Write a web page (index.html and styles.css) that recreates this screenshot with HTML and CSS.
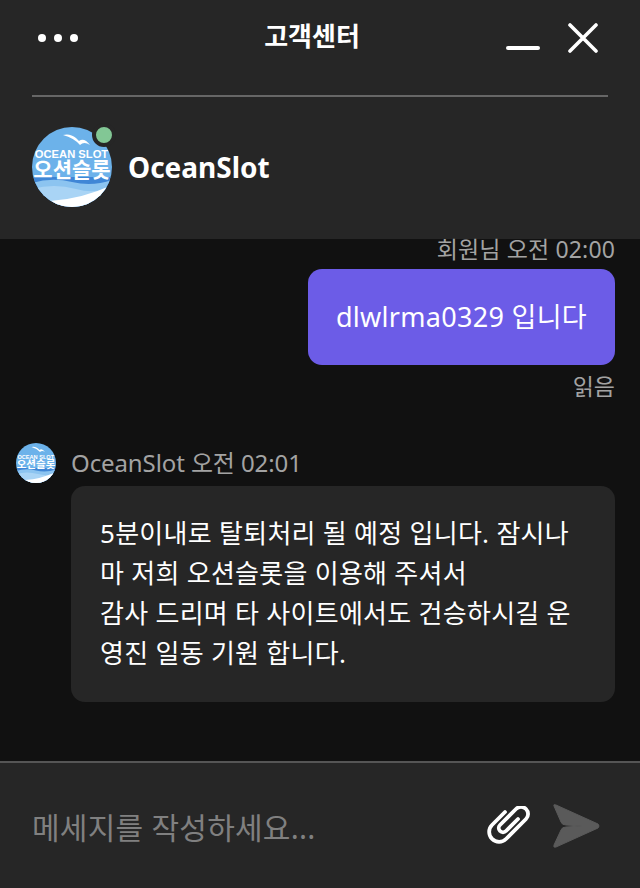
FILE: index.html
```html
<!DOCTYPE html>
<html lang="ko">

<head>
    <meta charset="utf-8">
    <title>고객센터</title>
    <link rel="stylesheet" href="styles.css">
</head>

<body>
    <div class="chat">
        <header class="top">
            <div class="bar">
                <div class="dots"><span></span><span></span><span></span></div>
                <h1 class="title">고객센터</h1>
                <div class="win">
                    <span class="min"></span>
                    <svg class="close" width="30" height="30" viewBox="0 0 30 30">
                        <path d="M2 2 L28 28 M28 2 L2 28" stroke="#fff" stroke-width="3.6" stroke-linecap="round" />
                    </svg>
                </div>
            </div>
            <div class="profile">
                <div class="avatar">
                    <svg class="logo" viewBox="0 0 80 80">
                        <use href="#logo" />
                    </svg>
                    <span class="online"></span>
                </div>
                <h2 class="name">OceanSlot</h2>
            </div>
        </header>

        <main class="list">
            <div class="msg mine">
                <div class="meta">회원님 오전 02:00</div>
                <div class="bubble purple">dlwlrma0329 입니다</div>
                <div class="read">읽음</div>
            </div>

            <div class="msg theirs">
                <svg class="small-logo" viewBox="0 0 80 80">
                    <use href="#logo" />
                </svg>
                <div class="theirs-body">
                    <div class="meta">OceanSlot 오전 02:01</div>
                    <div class="bubble gray">5분이내로 탈퇴처리 될 예정 입니다. 잠시나<br>마 저희 오션슬롯을 이용해 주셔서<br>감사 드리며 타 사이트에서도 건승하시길 운<br>영진 일동 기원 합니다.</div>
                </div>
            </div>
        </main>

        <footer class="bottom">
            <div class="placeholder">메세지를 작성하세요...</div>
            <svg class="clip" width="44" height="40" viewBox="0 0 44 40" fill="none">
                <path d="M18 6 L5 19 A9.9 9.9 0 0 0 19 33 L39 13 A7 7 0 0 0 29 3 L13 19 A4.2 4.2 0 0 0 19 25 L31 13" stroke="#fff" stroke-width="3.8" stroke-linecap="round" stroke-linejoin="round" />
            </svg>
            <svg class="send" width="48" height="44" viewBox="0 0 48 44">
                <path d="M2 2 Q1 0 4 1 L46 20 Q48 22 46 24 L4 43 Q1 44 2 41 L9 26 Q10 23 14 23 L30 22 L14 21 Q10 21 9 18 Z" fill="#5a5a5a" stroke="#5a5a5a" stroke-linejoin="round" />
            </svg>
        </footer>
    </div>

    <svg width="0" height="0" class="defs">
        <defs>
            <clipPath id="round">
                <circle cx="40" cy="40" r="40" />
            </clipPath>
            <g id="logo" clip-path="url(#round)">
                <rect width="80" height="80" fill="#6cb2ea" />
                <path d="M0 50 H80 V80 H0 Z" fill="#3f86d6" />
                <path d="M0 56 Q20 50 40 55 T80 53 V80 H0 Z" fill="#8cc4f0" />
                <path d="M0 62 Q22 56 44 62 T80 58 V80 H0 Z" fill="#a9d4f5" />
                <path d="M18 74 Q50 72 80 58 V80 H18 Z" fill="#fff" />
                <path d="M31 8 Q38 6 44 11 L47 14 Q52 10 58 18 Q52 14 48 18 Q42 11 31 8 Z" fill="#fff" />
                <text x="39.5" y="31" class="logo-en">OCEAN SLOT</text>
                <text x="40" y="50" class="logo-ko">오션슬롯</text>
            </g>
        </defs>
    </svg>
</body>

</html>
```

FILE: styles.css
```css
* {
    box-sizing: border-box;
    font-family: "Noto Sans", "Noto Sans CJK KR", sans-serif;
}

html,
body {
    margin: 0;
    padding: 0;
    height: 100%;
}

body {
    background-color: #111111;
}

.chat {
    display: flex;
    flex-direction: column;
    height: 888px;
    overflow: hidden;
}

.defs {
    display: block;
}

.top {
    height: 239px;
    flex-shrink: 0;
    padding: 0 32px;
    background-color: #262626;
}

.bar {
    display: flex;
    align-items: center;
    justify-content: space-between;
    height: 97px;
    padding: 0 11px 20px 6px;
    border-bottom: 2px solid #666666;
}

.dots {
    display: flex;
    gap: 8px;
}

.dots span {
    width: 8px;
    height: 8px;
    border-radius: 50%;
    background-color: #ffffff;
}

.title {
    margin: 0 0 5px 40px;
    font-size: 26px;
    font-weight: 700;
    color: #ffffff;
}

.win {
    display: flex;
    align-items: center;
    gap: 28px;
}

.min {
    width: 34px;
    height: 4px;
    margin-top: 20px;
    border-radius: 2px;
    background-color: #ffffff;
}

.close {
    display: block;
    margin: 0 -1px 0 0;
}

.profile {
    display: flex;
    align-items: center;
    gap: 16px;
    margin-top: 30px;
}

.avatar {
    position: relative;
    width: 80px;
    height: 80px;
}

.logo {
    display: block;
    width: 80px;
    height: 80px;
}

.logo-en {
    font-family: "Liberation Sans", sans-serif;
    font-size: 11.2px;
    font-weight: 700;
    fill: #ffffff;
    text-anchor: middle;
}

.logo-ko {
    font-size: 21px;
    font-weight: 700;
    fill: #ffffff;
    text-anchor: middle;
}

.online {
    position: absolute;
    top: -4px;
    right: -4px;
    width: 24px;
    height: 24px;
    border: 4px solid #262626;
    border-radius: 50%;
    background-color: #82c795;
}

.name {
    margin: 0;
    font-size: 28px;
    font-weight: 700;
    color: #ffffff;
}

.list {
    flex-grow: 1;
    padding: 0 25px 0 16px;
    background-color: #111111;
}

.meta {
    font-size: 24px;
    line-height: 20px;
    letter-spacing: -0.1px;
    color: #a3a3a3;
}

.mine {
    display: flex;
    flex-direction: column;
    align-items: flex-end;
}

.mine .meta {
    margin-bottom: 10px;
    font-size: 23px;
    letter-spacing: 0.15px;
}

.bubble {
    color: #ffffff;
    border-radius: 14px;
}

.purple {
    height: 96px;
    padding: 0 28px;
    font-size: 27px;
    letter-spacing: 0.3px;
    line-height: 96px;
    background-color: #6c5ce7;
}

.read {
    margin-top: 9px;
    font-size: 23px;
    line-height: 24px;
    color: #a3a3a3;
}

.theirs {
    display: flex;
    gap: 15px;
    margin-top: 44px;
}

.small-logo {
    flex-shrink: 0;
    width: 40px;
    height: 40px;
    margin-top: 1px;
}

.theirs-body {
    flex-grow: 1;
    padding-top: 11px;
}

.theirs .meta {
    margin-bottom: 13px;
}

.gray {
    height: 216px;
    padding: 27px 29px;
    font-size: 26px;
    letter-spacing: 0.28px;
    line-height: 40px;
    background-color: #262626;
}

.bottom {
    display: flex;
    align-items: center;
    flex-shrink: 0;
    height: 127px;
    padding: 0 40px 0 32px;
    border-top: 2px solid #555555;
    background-color: #262626;
}

.placeholder {
    flex-grow: 1;
    font-size: 30px;
    letter-spacing: 0.25px;
    color: #808080;
}

.clip {
    display: block;
    margin-right: 21px;
}

.send {
    display: block;
}
```
